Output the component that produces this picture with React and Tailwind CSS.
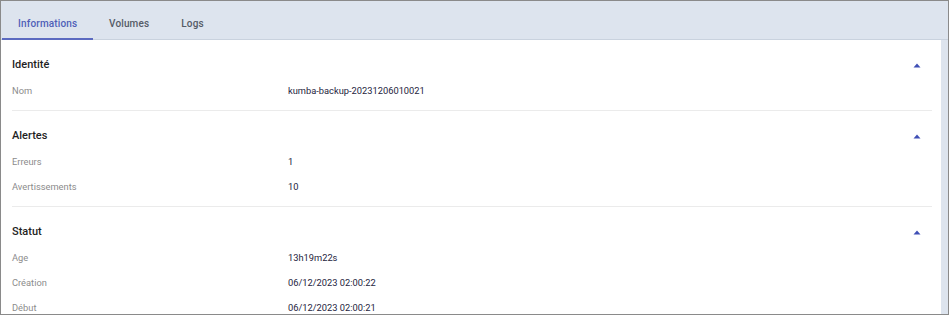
import React from "react";

const sections = [
  { title: "Identité", rows: [["Nom", "kumba-backup-20231206010021"]] },
  { title: "Alertes", rows: [["Erreurs", "1"], ["Avertissements", "10"]] },
  {
    title: "Statut",
    rows: [
      ["Age", "13h19m22s"],
      ["Création", "06/12/2023 02:00:22"],
      ["Début", "06/12/2023 02:00:21"],
    ],
  },
];

function Tri() {
  return (
    <svg width="8" height="5" viewBox="0 0 8 5" className="block">
      <path d="M4 0.5 L7.5 4.5 L0.5 4.5 Z" fill="#3f4fb5" />
    </svg>
  );
}

export default function App() {
  return (
    <div
      className="w-[949px] h-[315px] overflow-hidden border border-[#8a8a8a] bg-white flex flex-col"
      style={{ fontFamily: "Roboto, 'Noto Sans', sans-serif" }}
    >
      <div className="h-[39px] shrink-0 bg-[#dde4ee] flex items-stretch border-b border-[#c9d2de]">
        <div className="relative pl-[16px] pr-[15px] w-[91px] pt-[6px] flex items-center text-[10px] font-medium tracking-[0.15px] text-[#4f5fb8] ml-[1px]">
          Informations
          <div className="absolute left-0 right-0 bottom-[-1px] h-[2px] bg-[#5b6ac0]" />
        </div>
        <div className="pl-[16px] pr-[16px] pt-[6px] flex items-center text-[10px] font-medium tracking-[0.15px] text-[#555b66]">
          Volumes
        </div>
        <div className="pl-[16px] pr-[16px] pt-[6px] flex items-center text-[10px] font-medium tracking-[0.15px] text-[#555b66]">
          Logs
        </div>
      </div>
      <div className="flex-1 flex min-h-0">
        <div className="flex-1 overflow-hidden pl-[11px] pr-[9px]">
          {sections.map((s) => (
            <div key={s.title} className="pt-[15px] pb-[7px] border-b border-[#ebebeb]">
              <div className="h-[20px] flex items-center justify-between">
                <span className="text-[11px] font-medium text-[#1f1f1f]">{s.title}</span>
                <span className="mr-[11px]"><Tri /></span>
              </div>
              <div className="mt-[3px]">
                {s.rows.map(([k, v]) => (
                  <div key={k} className="h-[25px] flex items-center text-[9.3px]">
                    <span className="w-[276px] text-[#8c8c8c]">{k}</span>
                    <span className="text-[#1e1d3d]">{v}</span>
                  </div>
                ))}
              </div>
            </div>
          ))}
        </div>
        <div className="w-[7px] bg-[#dde4ee] shrink-0" />
      </div>
    </div>
  );
}
